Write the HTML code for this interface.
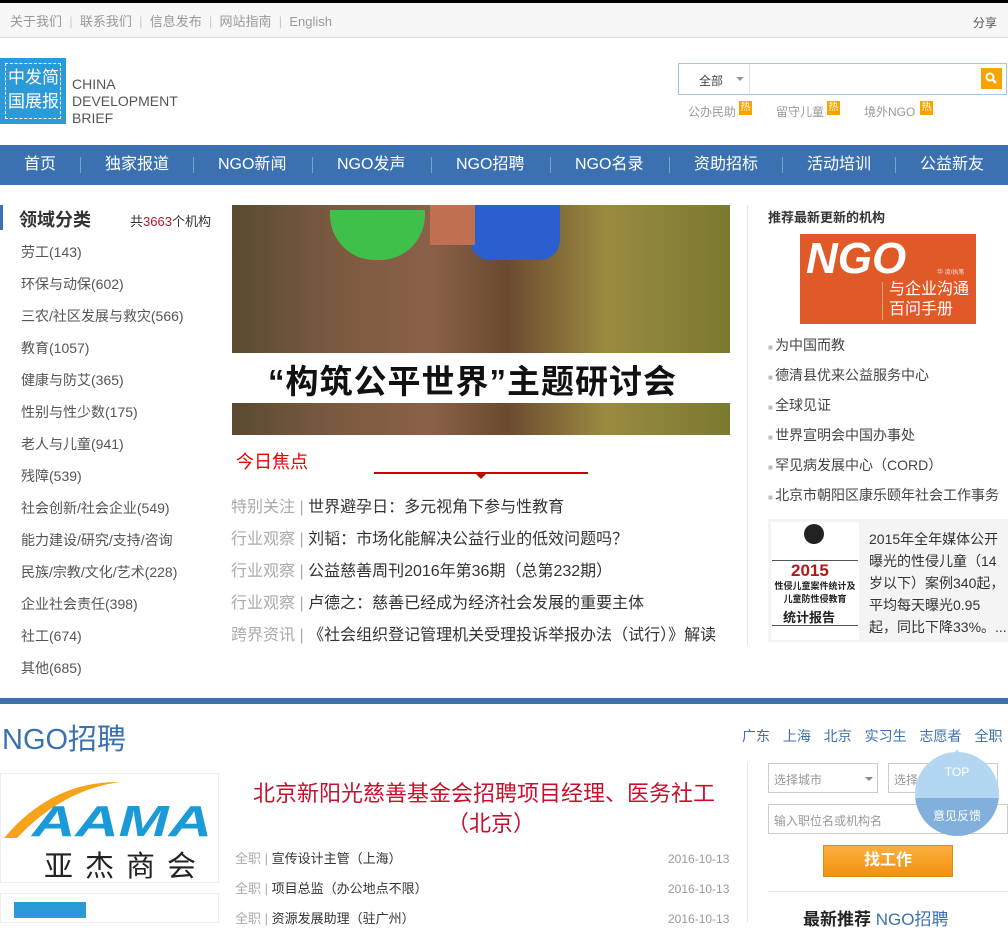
<!DOCTYPE html>
<html><head><meta charset="utf-8"><style>
*{margin:0;padding:0;box-sizing:border-box}
body{width:1008px;height:916px;overflow:hidden;position:relative;background:#fff;font-family:"Liberation Sans","Noto Sans CJK SC",sans-serif;color:#333}
.a{position:absolute;white-space:nowrap}
.r div{height:30px;line-height:30px}
</style></head><body>
<div class="a" style="left:0;top:0;width:1008px;height:3px;background:#000"></div>
<div class="a" style="left:0;top:3px;width:1008px;height:35px;background:#f7f7f7;border-bottom:1px solid #ddd"></div>
<div class="a" style="left:10px;top:11px;font-size:13px;color:#999">关于我们 &nbsp;<span style="color:#ccc">|</span>&nbsp; 联系我们 &nbsp;<span style="color:#ccc">|</span>&nbsp; 信息发布 &nbsp;<span style="color:#ccc">|</span>&nbsp; 网站指南 &nbsp;<span style="color:#ccc">|</span>&nbsp; English</div>
<div class="a" style="left:973px;top:14px;font-size:12px;color:#555">分享</div>

<div class="a" style="left:0;top:58px;width:66px;height:66px;background:#2d9ad8"></div>
<div class="a" style="left:5px;top:63px;width:56px;height:56px;border:1px dashed #fff"></div>
<div class="a" style="left:8px;top:66px;font-size:17px;line-height:24px;color:#fff;width:52px;white-space:normal">中发简<br>国展报</div>
<div class="a" style="left:72px;top:76px;font-size:14px;line-height:17px;color:#555">CHINA<br>DEVELOPMENT<br>BRIEF</div>

<div class="a" style="left:678px;top:63px;width:329px;height:32px;border:1px solid #a9c3e0;background:#fff"></div>
<div class="a" style="left:749px;top:64px;width:1px;height:30px;background:#e5e5e5"></div>
<div class="a" style="left:699px;top:72px;font-size:12px;color:#444">全部</div>
<div class="a" style="left:736px;top:77px;border:4px solid transparent;border-top:4px solid #999"></div>
<div class="a" style="left:981px;top:68px;width:21px;height:21px;background:#f9a300"></div>
<svg class="a" style="left:984px;top:71px" width="15" height="15" viewBox="0 0 15 15"><circle cx="6" cy="6" r="3.5" stroke="#fff" stroke-width="2" fill="none"/><path d="M8.5 8.5L12 12" stroke="#fff" stroke-width="2.5"/></svg>
<div class="a" style="left:688px;top:103px;font-size:12px;color:#999">公办民助</div>
<div class="a" style="left:739px;top:101px;width:13px;height:14px;background:#f9a300;color:#fff;font-size:10px;line-height:14px;text-align:center">热</div>
<div class="a" style="left:776px;top:103px;font-size:12px;color:#999">留守儿童</div>
<div class="a" style="left:827px;top:101px;width:13px;height:14px;background:#f9a300;color:#fff;font-size:10px;line-height:14px;text-align:center">热</div>
<div class="a" style="left:864px;top:103px;font-size:12px;color:#999">境外NGO</div>
<div class="a" style="left:920px;top:101px;width:13px;height:14px;background:#f9a300;color:#fff;font-size:10px;line-height:14px;text-align:center">热</div>

<div class="a" style="left:0;top:145px;width:1008px;height:40px;background:#3b71b0"></div>
<div class="a" style="left:0;top:145px;width:1008px;height:40px;color:#fff;font-size:16px;line-height:40px">
<span class="a" style="left:24px">首页</span>
<span class="a" style="left:105px">独家报道</span>
<span class="a" style="left:218px">NGO新闻</span>
<span class="a" style="left:337px">NGO发声</span>
<span class="a" style="left:456px">NGO招聘</span>
<span class="a" style="left:575px">NGO名录</span>
<span class="a" style="left:694px">资助招标</span>
<span class="a" style="left:807px">活动培训</span>
<span class="a" style="left:920px">公益新友</span>
</div>
<div class="a" style="left:80px;top:157px;width:1px;height:16px;background:#7fa2cc"></div>
<div class="a" style="left:193px;top:157px;width:1px;height:16px;background:#7fa2cc"></div>
<div class="a" style="left:312px;top:157px;width:1px;height:16px;background:#7fa2cc"></div>
<div class="a" style="left:431px;top:157px;width:1px;height:16px;background:#7fa2cc"></div>
<div class="a" style="left:550px;top:157px;width:1px;height:16px;background:#7fa2cc"></div>
<div class="a" style="left:669px;top:157px;width:1px;height:16px;background:#7fa2cc"></div>
<div class="a" style="left:782px;top:157px;width:1px;height:16px;background:#7fa2cc"></div>
<div class="a" style="left:895px;top:157px;width:1px;height:16px;background:#7fa2cc"></div>

<div class="a" style="left:0;top:205px;width:3px;height:25px;background:#3b71b0"></div>
<div class="a" style="left:19px;top:206px;font-size:18px;font-weight:bold;color:#333">领域分类</div>
<div class="a" style="left:130px;top:211px;font-size:13px;color:#333">共<span style="color:#c8102e">3663</span>个机构</div>
<div class="a" style="left:21px;top:236px;font-size:14px;line-height:32px;color:#555;white-space:normal;width:205px">劳工(143)<br>环保与动保(602)<br>三农/社区发展与救灾(566)<br>教育(1057)<br>健康与防艾(365)<br>性别与性少数(175)<br>老人与儿童(941)<br>残障(539)<br>社会创新/社会企业(549)<br>能力建设/研究/支持/咨询<br>民族/宗教/文化/艺术(228)<br>企业社会责任(398)<br>社工(674)<br>其他(685)</div>

<div class="a" style="left:232px;top:205px;width:498px;height:230px;background:linear-gradient(90deg,#5a4a30 0%,#7a5a40 20%,#8a6048 40%,#6a4a30 55%,#9a8a40 75%,#7a7a30 100%)"></div>
<div class="a" style="left:330px;top:210px;width:95px;height:50px;border-radius:0 0 45px 45px;background:#3ec04a"></div>
<div class="a" style="left:470px;top:205px;width:90px;height:55px;border-radius:0 0 20px 20px;background:#2b5fd0"></div>
<div class="a" style="left:430px;top:205px;width:45px;height:40px;background:#c07050"></div>
<div class="a" style="left:232px;top:353px;width:498px;height:50px;background:#fff"></div>
<div class="a" style="left:268px;top:355px;font-size:33px;font-weight:bold;color:#111;letter-spacing:1px">“构筑公平世界”主题研讨会</div>

<div class="a" style="left:236px;top:448px;font-size:18px;color:#e00">今日焦点</div>
<div class="a" style="left:374px;top:472px;width:214px;height:2px;background:#c00"></div>
<div class="a" style="left:476px;top:474px;border:5px solid transparent;border-top:5px solid #c00"></div>
<div class="a" style="left:231px;top:492px;font-size:16px;line-height:32px;color:#333">
<span style="color:#aaa">特别关注 | </span>世界避孕日：多元视角下参与性教育<br>
<span style="color:#aaa">行业观察 | </span>刘韬：市场化能解决公益行业的低效问题吗？<br>
<span style="color:#aaa">行业观察 | </span>公益慈善周刊2016年第36期（总第232期）<br>
<span style="color:#aaa">行业观察 | </span>卢德之：慈善已经成为经济社会发展的重要主体<br>
<span style="color:#aaa">跨界资讯 | </span>《社会组织登记管理机关受理投诉举报办法（试行）》解读</div>

<div class="a" style="left:747px;top:205px;width:1px;height:440px;background:#e5e5e5"></div>
<div class="a" style="left:768px;top:207px;font-size:13px;font-weight:bold;color:#333">推荐最新更新的机构</div>
<div class="a" style="left:800px;top:234px;width:176px;height:90px;background:#e05a28"></div>
<div class="a" style="left:806px;top:234px;font-size:44px;font-weight:bold;font-style:italic;color:#fff">NGO</div>
<div class="a" style="left:937px;top:267px;font-size:6px;color:#fdd">华 凌/执笔</div>
<div class="a" style="left:882px;top:282px;width:1px;height:38px;background:#f0a080"></div>
<div class="a" style="left:889px;top:280px;font-size:16px;line-height:20px;color:#fff">与企业沟通<br>百问手册</div>
<div class="a r" style="left:768px;top:330px;font-size:14px;color:#444">
<div><span style="color:#bbb;font-size:8px">■ </span>为中国而教</div>
<div><span style="color:#bbb;font-size:8px">■ </span>德清县优来公益服务中心</div>
<div><span style="color:#bbb;font-size:8px">■ </span>全球见证</div>
<div><span style="color:#bbb;font-size:8px">■ </span>世界宣明会中国办事处</div>
<div><span style="color:#bbb;font-size:8px">■ </span>罕见病发展中心（CORD）</div>
<div><span style="color:#bbb;font-size:8px">■ </span>北京市朝阳区康乐颐年社会工作事务</div>
</div>
<div class="a" style="left:768px;top:519px;width:240px;height:123px;background:#f4f4f4"></div>
<div class="a" style="left:771px;top:522px;width:88px;height:118px;background:#fff"></div>
<div class="a" style="left:804px;top:524px;width:20px;height:20px;border-radius:50%;background:#222"></div>
<div class="a" style="left:772px;top:560px;width:86px;height:1px;background:#555"></div>
<div class="a" style="left:791px;top:561px;font-size:17px;font-weight:bold;color:#b01818">2015</div>
<div class="a" style="left:774px;top:580px;font-size:9px;font-weight:bold;line-height:13px;color:#222;text-align:center;width:82px">性侵儿童案件统计及<br>儿童防性侵教育</div>
<div class="a" style="left:783px;top:607px;font-size:13px;font-weight:bold;color:#222">统计报告</div>
<div class="a" style="left:772px;top:625px;width:86px;height:1px;background:#555"></div>
<div class="a" style="left:869px;top:528px;font-size:14px;line-height:22px;color:#333">2015年全年媒体公开<br>曝光的性侵儿童（14<br>岁以下）案例340起，<br>平均每天曝光0.95<br>起，同比下降33%。...</div>

<div class="a" style="left:0;top:698px;width:1008px;height:6px;background:#3b71b0"></div>
<div class="a" style="left:2px;top:716px;font-size:29px;color:#3b71b0">NGO招聘</div>
<div class="a" style="left:742px;top:726px;font-size:14px;color:#3b71b0;word-spacing:9px">广东 上海 北京 实习生 志愿者 全职</div>

<div class="a" style="left:0;top:773px;width:219px;height:110px;border:1px solid #eee"></div>
<svg class="a" style="left:2px;top:776px" width="215" height="70" viewBox="0 0 215 70"><path d="M2 62 Q50 5 118 6 Q60 14 15 62Z" fill="#f5a31a"/><text x="30" y="60" font-size="44" font-style="italic" font-weight="bold" fill="#1a9ad8" font-family="Liberation Sans" textLength="180" lengthAdjust="spacingAndGlyphs">AAMA</text></svg>
<div class="a" style="left:44px;top:843px;font-size:29px;color:#222;letter-spacing:12px">亚杰商会</div>
<div class="a" style="left:0;top:893px;width:219px;height:30px;border:1px solid #eee"></div>
<div class="a" style="left:14px;top:902px;width:72px;height:16px;background:#2d9ad8"></div>

<div class="a" style="left:253px;top:776px;font-size:22px;color:#c8102e">北京新阳光慈善基金会招聘项目经理、医务社工</div>
<div class="a" style="left:447px;top:806px;font-size:22px;color:#c8102e">（北京）</div>
<div class="a" style="left:235px;top:844px;font-size:13px;line-height:30px;color:#333"><span style="color:#aaa">全职 | </span>宣传设计主管（上海）<br><span style="color:#aaa">全职 | </span>项目总监（办公地点不限）<br><span style="color:#aaa">全职 | </span>资源发展助理（驻广州）</div>
<div class="a" style="left:668px;top:844px;font-size:12px;line-height:30px;color:#999">2016-10-13<br>2016-10-13<br>2016-10-13</div>

<div class="a" style="left:747px;top:762px;width:1px;height:160px;background:#e5e5e5"></div>
<div class="a" style="left:768px;top:763px;width:110px;height:30px;border:1px solid #ccc"></div>
<div class="a" style="left:774px;top:771px;font-size:12px;color:#999">选择城市</div>
<div class="a" style="left:865px;top:777px;border:4px solid transparent;border-top:4px solid #888"></div>
<div class="a" style="left:888px;top:763px;width:110px;height:30px;border:1px solid #ccc"></div>
<div class="a" style="left:894px;top:771px;font-size:12px;color:#999">选择</div>
<div class="a" style="left:768px;top:804px;width:240px;height:30px;border:1px solid #ccc"></div>
<div class="a" style="left:774px;top:812px;font-size:12px;color:#999">输入职位名或机构名</div>
<div class="a" style="left:823px;top:845px;width:130px;height:32px;background:linear-gradient(#fbb040,#f39010);border:1px solid #e08a10;color:#fff;font-size:16px;font-weight:bold;text-align:center;line-height:30px">找工作</div>
<div class="a" style="left:768px;top:891px;width:240px;height:1px;background:#e5e5e5"></div>
<div class="a" style="left:803px;top:905px;font-size:17px;font-weight:bold;color:#222">最新推荐 <span style="color:#3b71b0;font-weight:normal">NGO招聘</span></div>

<div class="a" style="left:915px;top:752px;width:84px;height:84px;border-radius:50%;overflow:hidden">
<div style="height:46px;background:#b3d6f2;color:#fff;font-size:12px;text-align:center;padding-top:13px">TOP</div>
<div style="height:38px;background:#82b0dc;color:#fff;font-size:12px;text-align:center;padding-top:9px">意见反馈</div>
</div>
<div class="a" style="left:950px;top:742px;border:7px solid transparent;border-bottom:12px solid #b3d6f2"></div>
</body></html>
